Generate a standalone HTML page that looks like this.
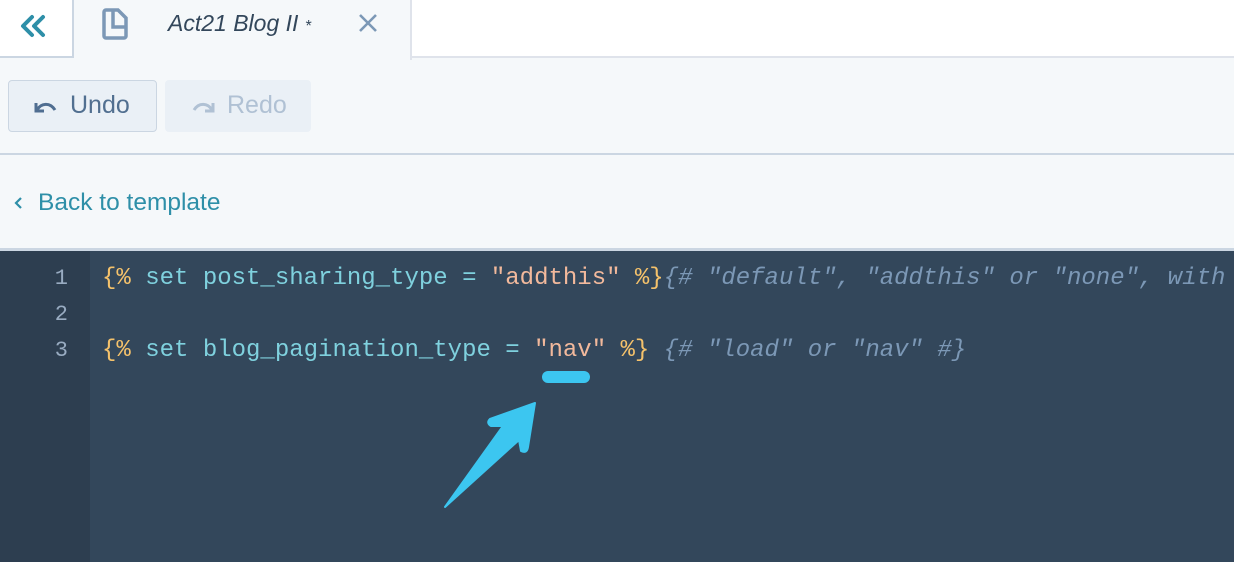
<!DOCTYPE html>
<html><head><style>
*{margin:0;padding:0;box-sizing:border-box}
body{width:1234px;height:562px;overflow:hidden;background:#f5f8fa;font-family:"Liberation Sans",sans-serif;position:relative}
.abs{position:absolute}
.code{font-family:"Liberation Mono",monospace;font-size:24px;white-space:pre;position:absolute;left:102px;line-height:36px}
.k{color:#f5c26b}.w{color:#7fd1de}.s{color:#f2b99c}.c{color:#7c98b6;font-style:italic}
.ln{position:absolute;left:0;width:68px;text-align:right;font-family:"Liberation Mono",monospace;font-size:22px;color:#99acc2;line-height:36px}
</style></head><body>
<div class="abs" style="left:0;top:0;width:1234px;height:58px;background:#fff;border-bottom:2px solid #dfe3eb"></div>
<div class="abs" style="left:0;top:0;width:74px;height:58px;background:#fff;border-right:2px solid #cbd6e2;border-bottom:2px solid #cbd6e2"></div>
<svg class="abs" style="left:20px;top:14px" width="26" height="24"><path d="M12 3L3 12L12 21M23 3L14 12L23 21" fill="none" stroke="#2e8fa8" stroke-width="4" stroke-linejoin="round" stroke-linecap="round"/></svg>
<div class="abs" style="left:74px;top:0;width:338px;height:60px;background:#f5f8fa;border-right:2px solid #dfe3eb"></div>
<svg class="abs" style="left:102px;top:8px" width="28" height="32" viewBox="0 0 28 32"><path d="M4 2h12l8 8v18a2 2 0 0 1-2 2H4a2 2 0 0 1-2-2V4a2 2 0 0 1 2-2z" fill="none" stroke="#7c98b6" stroke-width="3.5"/><path d="M11 3v16h12" fill="none" stroke="#7c98b6" stroke-width="3.5"/></svg>
<div class="abs" style="left:168px;top:10px;font-size:23px;font-style:italic;color:#33475b">Act21 Blog II <span style="font-size:16px">*</span></div>
<svg class="abs" style="left:358px;top:13px" width="20" height="20"><path d="M2 2L18 18M18 2L2 18" stroke="#7c98b6" stroke-width="2.6"/></svg>
<div class="abs" style="left:8px;top:80px;width:149px;height:52px;border:1.5px solid #cbd6e2;border-radius:4px;background:#eaf0f6"></div>
<svg class="abs" style="left:33px;top:97px" width="26" height="18"><path d="M3 6v8h8M4 13c4-7 13-8 18 0" fill="none" stroke="#506e91" stroke-width="3"/></svg>
<div class="abs" style="left:70px;top:91px;font-size:25px;color:#516f90">Undo</div>
<div class="abs" style="left:165px;top:80px;width:146px;height:52px;border-radius:4px;background:#eaf0f6"></div>
<svg class="abs" style="left:190px;top:97px" width="26" height="18"><path d="M23 6v8h-8M22 13c-4-7-13-8-18 0" fill="none" stroke="#b0c1d4" stroke-width="3"/></svg>
<div class="abs" style="left:227px;top:91px;font-size:25px;color:#b0c1d4">Redo</div>
<div class="abs" style="left:0;top:153px;width:1234px;height:2px;background:#cbd6e2"></div>
<svg class="abs" style="left:13px;top:196px" width="10" height="14"><path d="M8 2L3 7L8 12" fill="none" stroke="#2e8fa8" stroke-width="2.2"/></svg>
<div class="abs" style="left:38px;top:189px;font-size:24.5px;color:#2e8fa8">Back to template</div>
<div class="abs" style="left:0;top:248px;width:1234px;height:3px;background:#cbd6e2"></div>
<div class="abs" style="left:0;top:251px;width:1234px;height:311px;background:#33475b"></div>
<div class="abs" style="left:0;top:251px;width:90px;height:311px;background:#2d3e50"></div>
<div class="ln" style="top:261px">1</div>
<div class="ln" style="top:297px">2</div>
<div class="ln" style="top:333px">3</div>
<div class="code" style="top:261px"><span class="k">{%</span><span class="w"> set post_sharing_type = </span><span class="s">"addthis"</span> <span class="k">%}</span><span class="c">{# "default", "addthis" or "none", with</span></div>
<div class="code" style="top:333px"><span class="k">{%</span><span class="w"> set blog_pagination_type = </span><span class="s">"nav"</span> <span class="k">%}</span> <span class="c">{# "load" or "nav" #}</span></div>
<div class="abs" style="left:542px;top:371px;width:48px;height:12px;border-radius:6px;background:#3cc6f0"></div>
<svg class="abs" style="left:0;top:0" width="1234" height="562"><path d="M445 507L503 426L491 426Q486 423 490 419L535 403L528 447Q527 454 521 451L519 440Z" fill="#3cc6f0" stroke="#3cc6f0" stroke-width="2" stroke-linejoin="round"/></svg>
</body></html>
